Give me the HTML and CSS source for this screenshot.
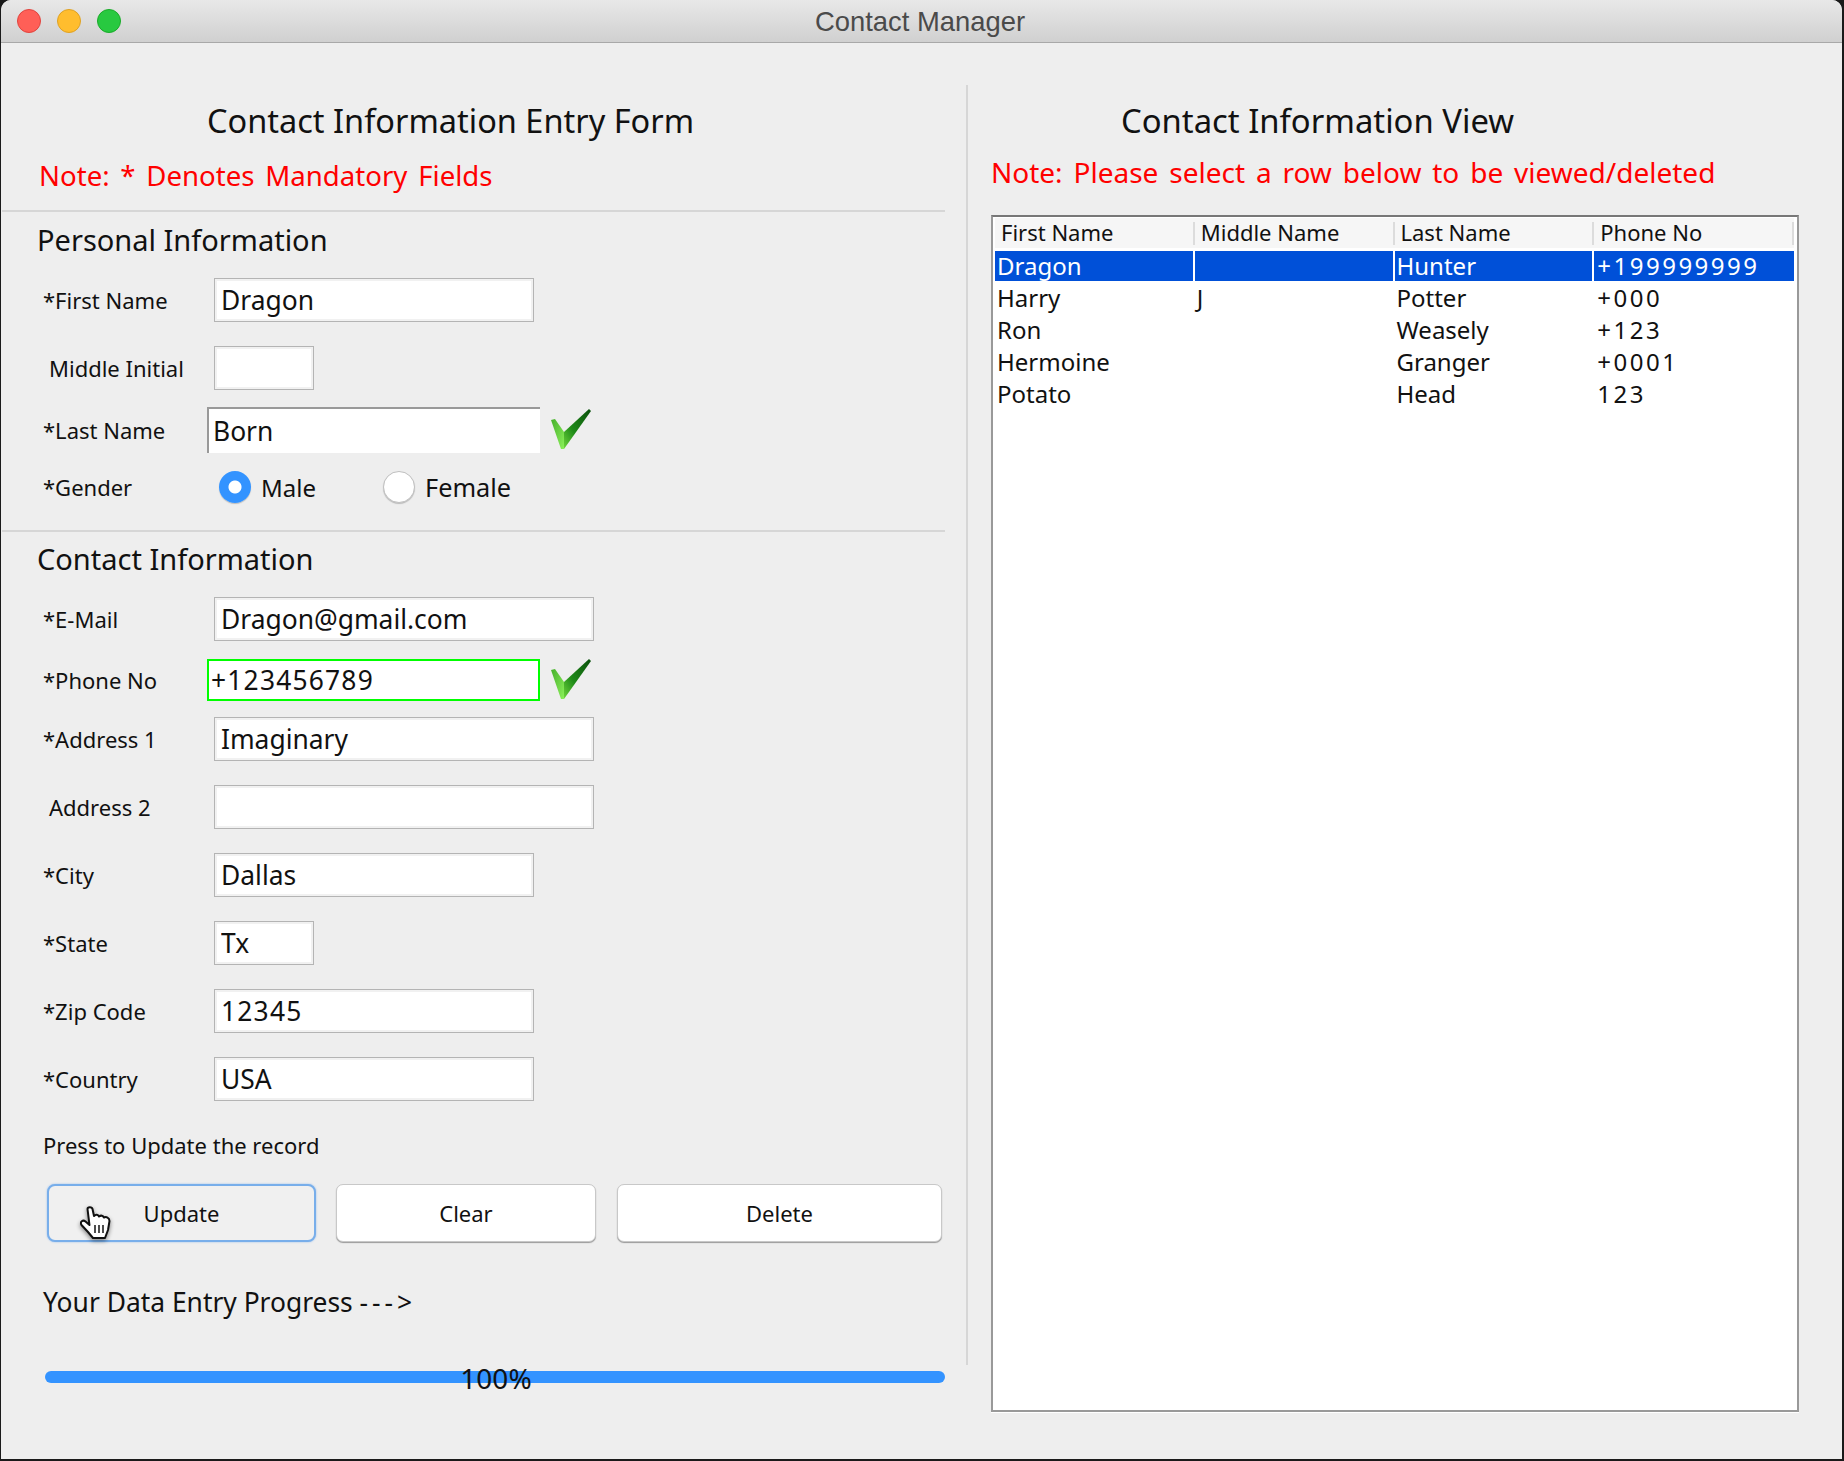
FILE: index.html
```html
<!DOCTYPE html>
<html lang="en">
<head>
    <meta charset="UTF-8">
    <title>Contact Manager</title>
    <link rel="stylesheet" href="styles.css">
</head>
<body>
    <svg class="defs">
        <defs>
            <linearGradient id="tickDark" x1="0" y1="1" x2="1" y2="0">
                <stop offset="0" stop-color="#6ed63c"/>
                <stop offset="0.4" stop-color="#1f8a18"/>
                <stop offset="1" stop-color="#0a4f0c"/>
            </linearGradient>
            <linearGradient id="tickLight" x1="0" y1="0" x2="1" y2="1">
                <stop offset="0" stop-color="#46b02c"/>
                <stop offset="1" stop-color="#8cf05a"/>
            </linearGradient>
            <symbol id="tick" viewBox="0 0 40 40">
                <polygon points="0,11 4,10 13,23 13,40 10,40" fill="url(#tickLight)"/>
                <polygon points="13,23 38,0 40,2 13,40" fill="url(#tickDark)"/>
            </symbol>
        </defs>
    </svg>
    <div class="window">
        <div class="titlebar">
            <span class="light red"></span>
            <span class="light yellow"></span>
            <span class="light green"></span>
            <div class="window-title">Contact Manager</div>
        </div>
        <div class="main">
            <div class="left">
                <h1 class="form-title">Contact Information Entry Form</h1>
                <p class="note form-note">Note: * Denotes Mandatory Fields</p>
                <div class="rule"></div>
                <h2>Personal Information</h2>
                <div class="row first">
                    <label>*First Name</label>
                    <input class="medium" type="text" value="Dragon">
                </div>
                <div class="row">
                    <label class="optional">Middle Initial</label>
                    <input class="small" type="text">
                </div>
                <div class="row near">
                    <label class="valid-label">*Last Name</label>
                    <input class="focused" type="text" value="Born">
                    <svg class="tick"><use href="#tick"/></svg>
                </div>
                <div class="row near gender">
                    <label>*Gender</label>
                    <span class="radio checked"></span>
                    <span class="radio-text male">Male</span>
                    <span class="radio"></span>
                    <span class="radio-text">Female</span>
                </div>
                <div class="rule second"></div>
                <h2 class="contact-head">Contact Information</h2>
                <div class="row first">
                    <label>*E-Mail</label>
                    <input class="large" type="text" value="Dragon@gmail.com">
                </div>
                <div class="row near">
                    <label class="valid-label">*Phone No</label>
                    <input class="valid digits" type="text" value="+123456789">
                    <svg class="tick"><use href="#tick"/></svg>
                </div>
                <div class="row address">
                    <label>*Address 1</label>
                    <input class="large" type="text" value="Imaginary">
                </div>
                <div class="row">
                    <label class="optional">Address 2</label>
                    <input class="large" type="text">
                </div>
                <div class="row">
                    <label>*City</label>
                    <input class="medium" type="text" value="Dallas">
                </div>
                <div class="row">
                    <label>*State</label>
                    <input class="small" type="text" value="Tx">
                </div>
                <div class="row">
                    <label>*Zip Code</label>
                    <input class="medium digits" type="text" value="12345">
                </div>
                <div class="row">
                    <label>*Country</label>
                    <input class="medium" type="text" value="USA">
                </div>
                <p class="press">Press to Update the record</p>
                <div class="buttons">
                    <button class="btn btn-update">Update
                        <svg class="hand" viewBox="0 0 31 33">
                            <path d="M7.5 3C7.5 .5 12 .5 12.5 3L14 10C16 8 18 8.500 19 10.500C21 9 23 9.500 24 11.500C26 10.500 29.500 11.500 29.500 15L28 24L25 32H13L8 26L1.500 19C-.5 15.500 3 13.500 5.500 15.500L9.500 19Z" fill="#fff" stroke="#111" stroke-width="2" stroke-linejoin="round"/>
                            <path d="M15 19V27M19 19V27M23 19V27" stroke="#222" stroke-width="1.600" fill="none"/>
                        </svg>
                    </button>
                    <button class="btn btn-clear">Clear</button>
                    <button class="btn btn-delete">Delete</button>
                </div>
                <p class="progress-label">Your Data Entry Progress <span class="arrow">---&gt;</span></p>
                <div class="progress"><span>100%</span></div>
            </div>
            <div class="divider"></div>
            <div class="right">
                <h1 class="view-title">Contact Information View</h1>
                <p class="note view-note">Note: Please select a row below to be viewed/deleted</p>
                <div class="table-box">
                    <table>
                        <thead>
                            <tr>
                                <th>First Name</th>
                                <th>Middle Name</th>
                                <th>Last Name</th>
                                <th>Phone No</th>
                            </tr>
                        </thead>
                        <tbody>
                            <tr class="selected"><td>Dragon</td><td></td><td>Hunter</td><td>+199999999</td></tr>
                            <tr><td>Harry</td><td>J</td><td>Potter</td><td>+000</td></tr>
                            <tr><td>Ron</td><td></td><td>Weasely</td><td>+123</td></tr>
                            <tr><td>Hermoine</td><td></td><td>Granger</td><td>+0001</td></tr>
                            <tr><td>Potato</td><td></td><td>Head</td><td>123</td></tr>
                        </tbody>
                    </table>
                </div>
            </div>
        </div>
    </div>
</body>
</html>
```

FILE: styles.css
```css
* {
    box-sizing: border-box;
}
html, body {
    height: 1461px;
    overflow: hidden;
}
body {
    margin: 0;
    background: #1a1a1a;
    font-family: "Noto Sans", sans-serif;
    color: #111;
}
.defs {
    width: 0;
    height: 0;
    display: block;
}
.window {
    width: 1841px;
    height: 1459px;
    margin-left: 1px;
    background: #eeeeee;
    border-radius: 10px 10px 0 0;
    overflow: hidden;
}
.titlebar {
    height: 43px;
    display: flex;
    align-items: center;
    padding-left: 16px;
    padding-bottom: 1px;
    gap: 16px;
    background: linear-gradient(#e8e8e8, #d0d0d0);
    border-bottom: 1px solid #a8a8a8;
}
.light {
    width: 24px;
    height: 24px;
    border-radius: 50%;
}
.red {
    background: #ff5f57;
    border: 1px solid #e0443e;
}
.yellow {
    background: #ffbd2e;
    border: 1px solid #dea123;
}
.green {
    background: #28c940;
    border: 1px solid #1aab29;
}
.window-title {
    margin: 3px 0 0 678px;
    font-family: "Liberation Sans", sans-serif;
    font-size: 27.400px;
    color: #4a4a4a;
}
.main {
    display: flex;
}
.left {
    width: 965px;
}
h1 {
    margin: 0;
    height: 40px;
    line-height: 40px;
    font-size: 32.500px;
    font-weight: 400;
    white-space: nowrap;
}
.form-title {
    margin-top: 58px;
    padding-left: 206px;
}
.view-title {
    margin-top: 58px;
    padding-left: 130px;
    font-size: 32.800px;
}
.note {
    margin: 0;
    height: 32px;
    line-height: 32px;
    font-size: 27.600px;
    color: #ff0000;
    word-spacing: 3.600px;
    white-space: nowrap;
}
.form-note {
    margin-top: 18px;
    padding-left: 38px;
}
.view-note {
    margin-top: 15px;
    font-size: 28px;
}
.rule {
    height: 2px;
    width: 943px;
    margin: 19px 0 0 1px;
    background: #d6d6d6;
}
.rule.second {
    margin-top: 26px;
}
h2 {
    margin: 10px 0 0 36px;
    height: 36px;
    line-height: 36px;
    font-size: 29px;
    font-weight: 400;
}
h2.contact-head {
    margin-top: 9px;
}
.row {
    display: flex;
    align-items: center;
    margin-top: 24px;
    padding-left: 42px;
    min-height: 44px;
    font-size: 22px;
}
.row.first {
    margin-top: 20px;
}
.row.near {
    margin-top: 17px;
}
.row.address {
    margin-top: 15px;
}
.row label {
    width: 171px;
    white-space: nowrap;
}
.row label.optional {
    padding-left: 6px;
}
.row label.valid-label {
    width: 164px;
}
input {
    height: 44px;
    padding: 0 6px;
    border: 1px solid #b4b4b4;
    background: #fff;
    box-shadow: inset 0 0 0 2px #f1f1f1;
    font-family: "Noto Sans", sans-serif;
    font-size: 26.400px;
    color: #111;
}
.digits {
    letter-spacing: 1.200px;
}
.small {
    width: 100px;
}
.medium {
    width: 320px;
}
.large {
    width: 380px;
}
.focused {
    width: 333px;
    height: 46px;
    padding: 0 4px;
    border: none;
    border-top: 2px solid #999;
    border-left: 2px solid #999;
    box-shadow: none;
}
.valid {
    width: 333px;
    height: 42px;
    padding: 0 2px;
    border: 2px solid #00ff00;
    box-shadow: none;
}
.tick {
    width: 40px;
    height: 40px;
    margin: -2px 0 0 11px;
}
.gender {
    min-height: 33px;
}
.gender label {
    width: 176px;
}
.radio {
    width: 32px;
    height: 32px;
    border-radius: 50%;
    background: #fff;
    border: 1px solid #c0c0c0;
    box-shadow: 0 1px 1px #bbb;
}
.radio.checked {
    background: radial-gradient(circle, #fff 0 6px, #3393ff 7px);
    border: none;
}
.radio-text {
    margin-left: 10px;
    font-size: 25.300px;
}
.male {
    width: 122px;
    font-size: 24px;
}
.press {
    margin: 27px 0 0 42px;
    height: 34px;
    line-height: 34px;
    font-size: 22px;
}
.buttons {
    display: flex;
    margin: 22px 0 0 46px;
}
.btn {
    height: 58px;
    border: 1px solid #c8c8c8;
    border-radius: 7px;
    background: #fff;
    box-shadow: 0 1px 1px #999;
    font-family: "Noto Sans", sans-serif;
    font-size: 22px;
    color: #111;
}
.btn-update {
    position: relative;
    width: 269px;
    background: #f0f0f0;
    border: 2px solid #78aeea;
    border-radius: 8px;
    box-shadow: 0 0 2px #8fbcf0;
}
.btn-clear {
    width: 260px;
    margin-left: 20px;
}
.btn-delete {
    width: 325px;
    margin-left: 21px;
}
.hand {
    position: absolute;
    left: 31px;
    top: 20px;
    width: 31px;
    height: 33px;
    filter: drop-shadow(0 2px 2px rgba(0, 0, 0, 0.45));
}
.progress-label {
    margin: 42px 0 0 42px;
    height: 36px;
    line-height: 36px;
    font-size: 26.400px;
}
.arrow {
    letter-spacing: 4px;
}
.progress {
    display: flex;
    justify-content: center;
    align-items: center;
    width: 900px;
    height: 12px;
    margin: 51px 0 0 44px;
    border-radius: 6px;
    background: #3393ff;
    font-size: 28px;
}
.progress span {
    padding: 2px 0 0 2px;
}
.divider {
    width: 2px;
    height: 1280px;
    margin-top: 42px;
    background: #d6d6d6;
}
.right {
    width: 830px;
    padding-left: 23px;
}
.table-box {
    width: 808px;
    height: 1197px;
    margin-top: 27px;
    padding: 1px 4px 0 2px;
    background: #fff;
    border: 2px solid #999;
    border-top-color: #777;
    box-shadow: 0 1px 0 #fff;
}
table {
    width: 799px;
    border-collapse: separate;
    border-spacing: 0;
    table-layout: fixed;
}
th {
    height: 33px;
    padding: 0 0 2px 6px;
    border-bottom: 3px solid #fff;
    background: linear-gradient(#dcdcdc, #dcdcdc) right center / 2px 23px no-repeat, #f6f6f6;
    background-clip: padding-box;
    font-size: 22px;
    line-height: 28px;
    font-weight: 400;
    text-align: left;
}
td {
    height: 32px;
    padding: 2px 0 0 2px;
    font-size: 24px;
    line-height: 28px;
    white-space: nowrap;
}
td:last-child {
    padding-left: 3px;
    letter-spacing: 2.500px;
}
.selected td {
    height: 30px;
    padding-top: 0;
    background: #0050d8;
    color: #fff;
    border-right: 2px solid #fff;
}
.selected td:last-child {
    border-right: none;
}
```
